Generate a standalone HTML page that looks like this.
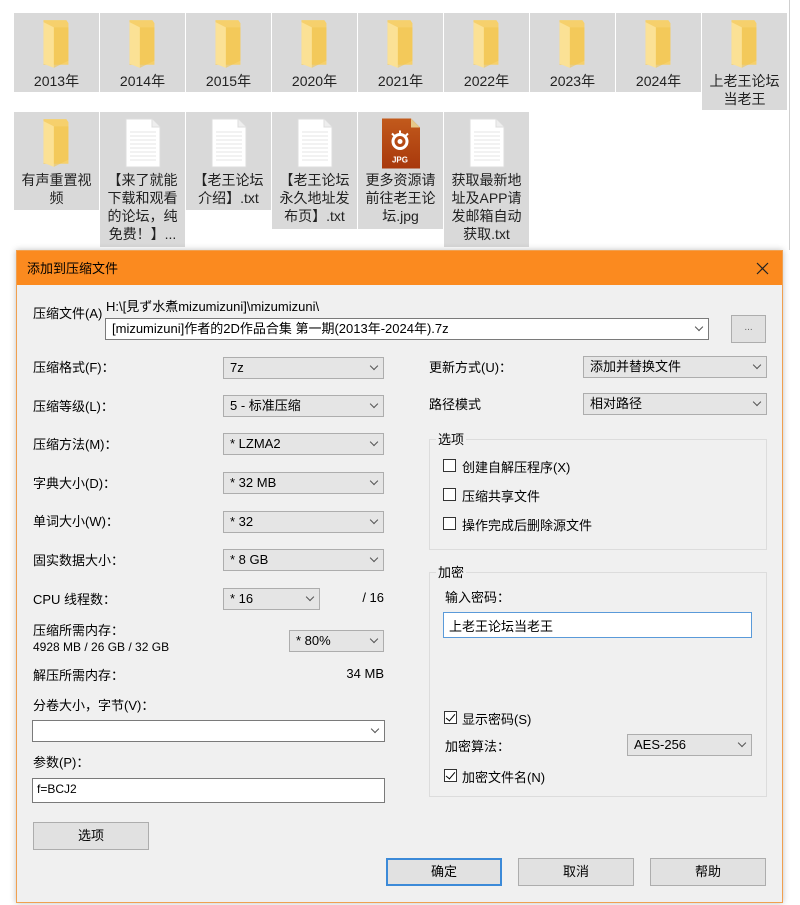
<!DOCTYPE html>
<html><head><meta charset="utf-8"><style>
*{box-sizing:border-box;margin:0;padding:0}
body{width:800px;height:905px;background:#fff;position:relative;overflow:hidden;font-family:"Liberation Sans","Noto Sans CJK SC",sans-serif;font-size:13px;color:#000}
.a{position:absolute;white-space:nowrap}
.tile{position:absolute;background:#d9d9d9;text-align:center;font-size:14px;line-height:18px;color:#222}
.tile svg{display:block;margin:5px auto 0}
.tile .t{margin-top:2px}
.cb{position:absolute;background:#e5e5e5;border:1px solid #adadad;height:22px;padding:0 0 0 6px;line-height:20px;font-size:13px}
.cb:after{content:"";position:absolute;right:6px;top:5px;width:5px;height:5px;border-right:1px solid #555;border-bottom:1px solid #555;transform:rotate(45deg)}
.cb.w{background:#fff;border-color:#7a7a7a}
.btn{position:absolute;background:#e1e1e1;border:1px solid #adadad;text-align:center;line-height:26px;font-size:13px}
.chk{position:absolute;width:13px;height:13px;border:1px solid #333;background:#fff}
.chk.on:after{content:"";position:absolute;left:3px;top:0px;width:4px;height:8px;border-right:1px solid #000;border-bottom:1px solid #000;transform:rotate(40deg)}
.grp{position:absolute;border:1px solid #dcdcdc}
.leg{position:absolute;background:#f0f0f0;padding:0 2px}
.r{text-align:right}
</style></head><body>
<div class="a" style="left:789px;top:0;width:1px;height:250px;background:#cfcfcf"></div>

<!-- row 1 -->
<div class="tile" style="left:14px;top:13px;width:85px;height:79px"><svg width="36" height="52" viewBox="0 0 34 50"><path d="M4 2h22l2 3v40H4z" fill="#f6d06c"/><path d="M4 4l10 5v39L4 44z" fill="#fbe195"/><path d="M14 9h14v32l-14 7z" fill="#f2c44f" opacity=".6"/></svg><div class="t">2013年</div></div>
<div class="tile" style="left:100px;top:13px;width:85px;height:79px"><svg width="36" height="52" viewBox="0 0 34 50"><path d="M4 2h22l2 3v40H4z" fill="#f6d06c"/><path d="M4 4l10 5v39L4 44z" fill="#fbe195"/><path d="M14 9h14v32l-14 7z" fill="#f2c44f" opacity=".6"/></svg><div class="t">2014年</div></div>
<div class="tile" style="left:186px;top:13px;width:85px;height:79px"><svg width="36" height="52" viewBox="0 0 34 50"><path d="M4 2h22l2 3v40H4z" fill="#f6d06c"/><path d="M4 4l10 5v39L4 44z" fill="#fbe195"/><path d="M14 9h14v32l-14 7z" fill="#f2c44f" opacity=".6"/></svg><div class="t">2015年</div></div>
<div class="tile" style="left:272px;top:13px;width:85px;height:79px"><svg width="36" height="52" viewBox="0 0 34 50"><path d="M4 2h22l2 3v40H4z" fill="#f6d06c"/><path d="M4 4l10 5v39L4 44z" fill="#fbe195"/><path d="M14 9h14v32l-14 7z" fill="#f2c44f" opacity=".6"/></svg><div class="t">2020年</div></div>
<div class="tile" style="left:358px;top:13px;width:85px;height:79px"><svg width="36" height="52" viewBox="0 0 34 50"><path d="M4 2h22l2 3v40H4z" fill="#f6d06c"/><path d="M4 4l10 5v39L4 44z" fill="#fbe195"/><path d="M14 9h14v32l-14 7z" fill="#f2c44f" opacity=".6"/></svg><div class="t">2021年</div></div>
<div class="tile" style="left:444px;top:13px;width:85px;height:79px"><svg width="36" height="52" viewBox="0 0 34 50"><path d="M4 2h22l2 3v40H4z" fill="#f6d06c"/><path d="M4 4l10 5v39L4 44z" fill="#fbe195"/><path d="M14 9h14v32l-14 7z" fill="#f2c44f" opacity=".6"/></svg><div class="t">2022年</div></div>
<div class="tile" style="left:530px;top:13px;width:85px;height:79px"><svg width="36" height="52" viewBox="0 0 34 50"><path d="M4 2h22l2 3v40H4z" fill="#f6d06c"/><path d="M4 4l10 5v39L4 44z" fill="#fbe195"/><path d="M14 9h14v32l-14 7z" fill="#f2c44f" opacity=".6"/></svg><div class="t">2023年</div></div>
<div class="tile" style="left:616px;top:13px;width:85px;height:79px"><svg width="36" height="52" viewBox="0 0 34 50"><path d="M4 2h22l2 3v40H4z" fill="#f6d06c"/><path d="M4 4l10 5v39L4 44z" fill="#fbe195"/><path d="M14 9h14v32l-14 7z" fill="#f2c44f" opacity=".6"/></svg><div class="t">2024年</div></div>
<div class="tile" style="left:702px;top:13px;width:85px;height:97px"><svg width="36" height="52" viewBox="0 0 34 50"><path d="M4 2h22l2 3v40H4z" fill="#f6d06c"/><path d="M4 4l10 5v39L4 44z" fill="#fbe195"/><path d="M14 9h14v32l-14 7z" fill="#f2c44f" opacity=".6"/></svg><div class="t">上老王论坛<br>当老王</div></div>

<!-- row 2 -->
<div class="tile" style="left:14px;top:112px;width:85px;height:98px"><svg width="36" height="52" viewBox="0 0 34 50"><path d="M4 2h22l2 3v40H4z" fill="#f6d06c"/><path d="M4 4l10 5v39L4 44z" fill="#fbe195"/><path d="M14 9h14v32l-14 7z" fill="#f2c44f" opacity=".6"/></svg><div class="t">有声重置视<br>频</div></div>
<div class="tile" style="left:100px;top:112px;width:85px;height:135px"><svg width="36" height="52" viewBox="0 0 36 50"><path d="M1 1h26l8 8v40H1z" fill="#fff" stroke="#ddd"/><path d="M27 1v8h8" fill="#eee" stroke="#ddd"/><g stroke="#e4e4e4"><path d="M5 14h26M5 18h26M5 22h26M5 26h26M5 30h26M5 34h26M5 38h26M5 42h26"/></g></svg><div class="t">【来了就能<br>下载和观看<br>的论坛，纯<br>免费！】...</div></div>
<div class="tile" style="left:186px;top:112px;width:85px;height:98px"><svg width="36" height="52" viewBox="0 0 36 50"><path d="M1 1h26l8 8v40H1z" fill="#fff" stroke="#ddd"/><path d="M27 1v8h8" fill="#eee" stroke="#ddd"/><g stroke="#e4e4e4"><path d="M5 14h26M5 18h26M5 22h26M5 26h26M5 30h26M5 34h26M5 38h26M5 42h26"/></g></svg><div class="t">【老王论坛<br>介绍】.txt</div></div>
<div class="tile" style="left:272px;top:112px;width:85px;height:117px"><svg width="36" height="52" viewBox="0 0 36 50"><path d="M1 1h26l8 8v40H1z" fill="#fff" stroke="#ddd"/><path d="M27 1v8h8" fill="#eee" stroke="#ddd"/><g stroke="#e4e4e4"><path d="M5 14h26M5 18h26M5 22h26M5 26h26M5 30h26M5 34h26M5 38h26M5 42h26"/></g></svg><div class="t">【老王论坛<br>永久地址发<br>布页】.txt</div></div>
<div class="tile" style="left:358px;top:112px;width:85px;height:117px"><svg width="40" height="53" viewBox="0 0 40 52"><defs><linearGradient id="g" x1="0" y1="0" x2="0" y2="1"><stop offset="0" stop-color="#c25a1c"/><stop offset="1" stop-color="#a8380c"/></linearGradient></defs><path d="M1 1h29l9 9v41H1z" fill="url(#g)"/><path d="M30 1v9h9z" fill="#e6c98a"/><circle cx="19" cy="24" r="7" fill="none" stroke="#fff" stroke-width="3"/><circle cx="19" cy="24" r="2.5" fill="#fff"/><path d="M11 16l3 3M19 13v3M27 16l-3 3" stroke="#fff" stroke-width="2"/><text x="19" y="45" font-size="8" font-family="Liberation Sans" fill="#fff" text-anchor="middle" font-weight="bold">JPG</text></svg><div class="t" style="margin-top:1px">更多资源请<br>前往老王论<br>坛.jpg</div></div>
<div class="tile" style="left:444px;top:112px;width:85px;height:135px"><svg width="36" height="52" viewBox="0 0 36 50"><path d="M1 1h26l8 8v40H1z" fill="#fff" stroke="#ddd"/><path d="M27 1v8h8" fill="#eee" stroke="#ddd"/><g stroke="#e4e4e4"><path d="M5 14h26M5 18h26M5 22h26M5 26h26M5 30h26M5 34h26M5 38h26M5 42h26"/></g></svg><div class="t">获取最新地<br>址及APP请<br>发邮箱自动<br>获取.txt</div></div>

<!-- dialog -->
<div class="a" style="left:16px;top:250px;width:767px;height:653px;background:#f0f0f0;border:1px solid #f0a050;box-shadow:0 0 6px rgba(0,0,0,.25)">
<div class="a" style="left:0;top:0;width:765px;height:34px;background:#fb8a1f"></div>
</div>
<div class="a" style="left:27px;top:258px;font-size:13px">添加到压缩文件</div>
<svg class="a" style="left:756px;top:262px" width="13" height="13"><path d="M1 1l11 11M12 1L1 12" stroke="#222" stroke-width="1.2"/></svg>

<div class="a" style="left:33px;top:303px">压缩文件(A)</div>
<div class="a" style="left:106px;top:296px">H:\[見ず水煮mizumizuni]\mizumizuni\</div>
<div class="cb w" style="left:105px;top:318px;width:604px">[mizumizuni]作者的2D作品合集 第一期(2013年-2024年).7z</div>
<div class="btn" style="left:731px;top:315px;width:35px;height:28px;line-height:24px;font-size:10px;color:#666">...</div>

<div class="a" style="left:33px;top:357px">压缩格式(F)：</div>
<div class="cb" style="left:223px;top:357px;width:161px">7z</div>
<div class="a" style="left:33px;top:396px">压缩等级(L)：</div>
<div class="cb" style="left:223px;top:395px;width:161px">5 - 标准压缩</div>
<div class="a" style="left:33px;top:434px">压缩方法(M)：</div>
<div class="cb" style="left:223px;top:433px;width:161px">* LZMA2</div>
<div class="a" style="left:33px;top:473px">字典大小(D)：</div>
<div class="cb" style="left:223px;top:472px;width:161px">* 32 MB</div>
<div class="a" style="left:33px;top:511px">单词大小(W)：</div>
<div class="cb" style="left:223px;top:511px;width:161px">* 32</div>
<div class="a" style="left:33px;top:550px">固实数据大小：</div>
<div class="cb" style="left:223px;top:549px;width:161px">* 8 GB</div>
<div class="a" style="left:33px;top:589px">CPU 线程数：</div>
<div class="cb" style="left:223px;top:588px;width:97px">* 16</div>
<div class="a r" style="left:334px;top:590px;width:50px">/ 16</div>
<div class="a" style="left:33px;top:620px">压缩所需内存：</div>
<div class="a" style="left:33px;top:640px;font-size:12px">4928 MB / 26 GB / 32 GB</div>
<div class="cb" style="left:289px;top:630px;width:95px">* 80%</div>
<div class="a" style="left:33px;top:665px">解压所需内存：</div>
<div class="a r" style="left:304px;top:666px;width:80px">34 MB</div>
<div class="a" style="left:33px;top:695px">分卷大小，字节(V)：</div>
<div class="cb w" style="left:32px;top:720px;width:353px"></div>
<div class="a" style="left:33px;top:752px">参数(P)：</div>
<div class="a" style="left:32px;top:778px;width:353px;height:25px;background:#fff;border:1px solid #7a7a7a;padding:3px 4px;font-size:12px">f=BCJ2</div>
<div class="btn" style="left:33px;top:822px;width:116px;height:28px">选项</div>

<div class="a" style="left:429px;top:357px">更新方式(U)：</div>
<div class="cb" style="left:583px;top:356px;width:184px">添加并替换文件</div>
<div class="a" style="left:429px;top:394px">路径模式</div>
<div class="cb" style="left:583px;top:393px;width:184px">相对路径</div>

<div class="grp" style="left:429px;top:439px;width:338px;height:111px"></div>
<div class="a leg" style="left:436px;top:429px">选项</div>
<div class="chk" style="left:443px;top:459px"></div><div class="a" style="left:462px;top:457px">创建自解压程序(X)</div>
<div class="chk" style="left:443px;top:488px"></div><div class="a" style="left:462px;top:486px">压缩共享文件</div>
<div class="chk" style="left:443px;top:517px"></div><div class="a" style="left:462px;top:515px">操作完成后删除源文件</div>

<div class="grp" style="left:429px;top:572px;width:338px;height:225px"></div>
<div class="a leg" style="left:436px;top:562px">加密</div>
<div class="a" style="left:445px;top:587px">输入密码：</div>
<div class="a" style="left:443px;top:612px;width:309px;height:26px;background:#fff;border:1px solid #5a9ad9;padding:3px 5px;font-size:13px">上老王论坛当老王</div>
<div class="chk on" style="left:444px;top:711px"></div><div class="a" style="left:462px;top:709px">显示密码(S)</div>
<div class="a" style="left:445px;top:736px">加密算法：</div>
<div class="cb" style="left:627px;top:734px;width:125px">AES-256</div>
<div class="chk on" style="left:444px;top:769px"></div><div class="a" style="left:462px;top:767px">加密文件名(N)</div>

<div class="btn" style="left:386px;top:858px;width:116px;height:28px;border:2px solid #3c8ad8;line-height:24px">确定</div>
<div class="btn" style="left:518px;top:858px;width:116px;height:28px">取消</div>
<div class="btn" style="left:650px;top:858px;width:116px;height:28px">帮助</div>
</body></html>
